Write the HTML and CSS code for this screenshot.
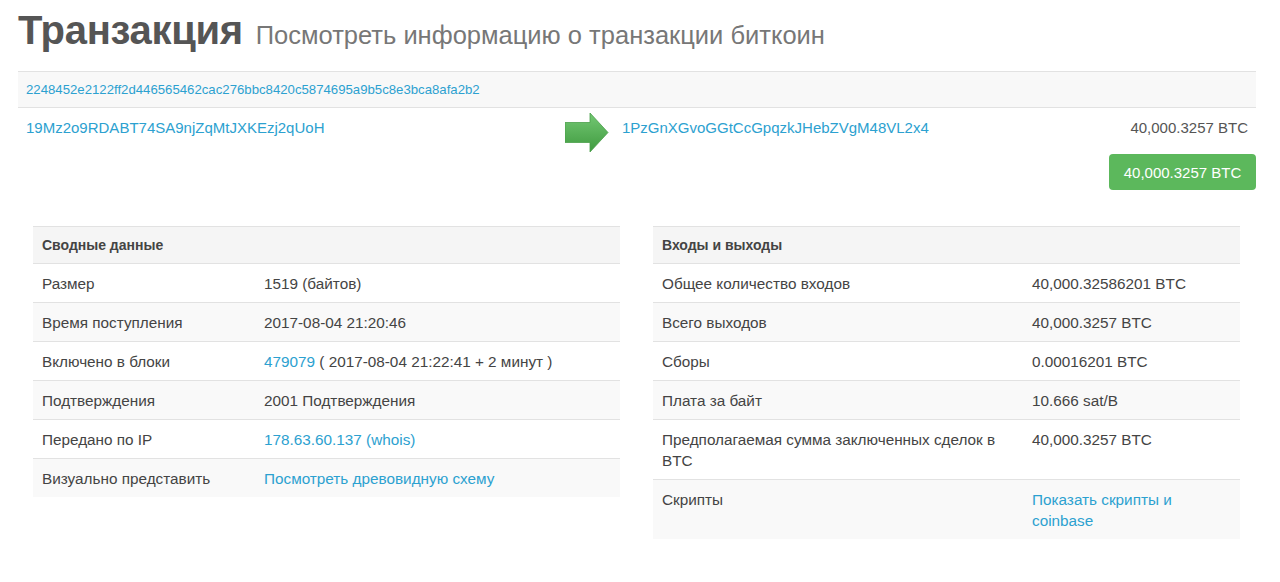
FILE: index.html
```html
<!DOCTYPE html>
<html lang="ru">
<head>
<meta charset="utf-8">
<title>Транзакция</title>
<link rel="stylesheet" href="styles.css">
</head>
<body>
<div class="page">
  <h1 class="title">Транзакция <small>Посмотреть информацию о транзакции биткоин</small></h1>

  <div class="tx">
    <div class="tx-hash"><a href="#">2248452e2122ff2d446565462cac276bbc8420c5874695a9b5c8e3bca8afa2b2</a></div>
    <div class="tx-flow">
      <div class="tx-in"><a href="#">19Mz2o9RDABT74SA9njZqMtJXKEzj2qUoH</a></div>
      <div class="tx-arrow">
        <svg width="44" height="40" viewBox="0 0 44 40">
          <defs>
            <linearGradient id="g" x1="0" y1="0" x2="0" y2="1">
              <stop offset="0" stop-color="#74c874"/>
              <stop offset="1" stop-color="#3f9a3f"/>
            </linearGradient>
          </defs>
          <polygon points="0,9.5 25,9.5 25,0 43,19.5 25,39 25,29.5 0,29.5" fill="url(#g)" stroke="#4a9f4a" stroke-width="0.8"/>
        </svg>
      </div>
      <div class="tx-out"><a href="#">1PzGnXGvoGGtCcGpqzkJHebZVgM48VL2x4</a></div>
      <div class="tx-amount">40,000.3257 BTC</div>
    </div>
    <div class="tx-total"><span class="btn-total">40,000.3257 BTC</span></div>
  </div>

  <div class="cols">
    <div class="col">
      <table class="info left">
        <thead><tr><th colspan="2">Сводные данные</th></tr></thead>
        <tbody>
          <tr><td>Размер</td><td>1519 (байтов)</td></tr>
          <tr><td>Время поступления</td><td>2017-08-04 21:20:46</td></tr>
          <tr><td>Включено в блоки</td><td><a href="#">479079</a> ( 2017-08-04 21:22:41 + 2 минут )</td></tr>
          <tr><td>Подтверждения</td><td>2001 Подтверждения</td></tr>
          <tr><td>Передано по IP</td><td><a href="#">178.63.60.137 (whois)</a></td></tr>
          <tr><td>Визуально представить</td><td><a href="#">Посмотреть древовидную схему</a></td></tr>
        </tbody>
      </table>
    </div>
    <div class="col">
      <table class="info right">
        <thead><tr><th colspan="2">Входы и выходы</th></tr></thead>
        <tbody>
          <tr><td>Общее количество входов</td><td>40,000.32586201 BTC</td></tr>
          <tr><td>Всего выходов</td><td>40,000.3257 BTC</td></tr>
          <tr><td>Сборы</td><td>0.00016201 BTC</td></tr>
          <tr><td>Плата за байт</td><td>10.666 sat/B</td></tr>
          <tr><td>Предполагаемая сумма заключенных сделок в BTC</td><td>40,000.3257 BTC</td></tr>
          <tr><td>Скрипты</td><td><a href="#">Показать скрипты и coinbase</a></td></tr>
        </tbody>
      </table>
    </div>
  </div>
</div>
</body>
</html>
```

FILE: styles.css
```css
* { box-sizing: border-box; }
html, body { margin: 0; padding: 0; background: #fff; }
body {
  font-family: "Liberation Sans", Arial, sans-serif;
  color: #444;
  font-size: 15px;
}
a { color: #2ca1d0; text-decoration: none; }

.page { padding: 0 24px 0 18px; }

.title {
  margin: 0;
  padding-top: 6px;
  height: 71px;
  font-size: 40px;
  font-weight: bold;
  color: #555;
  line-height: 48px;
  letter-spacing: -0.3px;
}
.title small {
  font-size: 25.5px;
  font-weight: normal;
  color: #777;
  letter-spacing: 0;
  margin-left: 2px;
}

.tx-hash {
  background: #f8f8f8;
  border-top: 1px solid #e2e2e2;
  border-bottom: 1px solid #e2e2e2;
  height: 37px;
  padding: 0 8px;
  display: flex;
  align-items: center;
  font-size: 13.2px;
}

.tx-flow {
  display: flex;
  align-items: flex-start;
  padding: 10px 8px 0 8px;
  height: 46px;
}
.tx-in { width: 539px; padding-top: 1px; }
.tx-arrow { width: 57px; margin-top: -5px; }
.tx-out { flex: 1; padding-top: 1px; }
.tx-amount { color: #555; padding-top: 1px; }

.tx-total {
  display: flex;
  justify-content: flex-end;
}
.btn-total {
  background: #5cb85c;
  color: #fff;
  border-radius: 4px;
  height: 36px;
  width: 147px;
  display: flex;
  align-items: center;
  justify-content: center;
  font-size: 15px;
}

.cols {
  display: flex;
  margin-top: 36px;
}
.col { flex: 1; padding: 0 15px; }
.col:first-child { padding-right: 17px; }
.col:last-child { padding-left: 16px; padding-right: 16px; }

.info {
  width: 100%;
  border-collapse: collapse;
  font-size: 15.3px;
}
.info th {
  text-align: left;
  background: #f5f5f5;
  border-top: 1px solid #e2e2e2;
  font-size: 14px;
  font-weight: bold;
  color: #444;
  padding: 8px 9px 7px;
  line-height: 21px;
}
.info td {
  border-top: 1px solid #e2e2e2;
  padding: 9px 9px 8px;
  line-height: 21px;
  vertical-align: top;
}
.info tbody tr:nth-child(even) td { background: #f9f9f9; }
.left td:first-child { width: 222px; }
.right td:first-child { width: 370px; }
```
